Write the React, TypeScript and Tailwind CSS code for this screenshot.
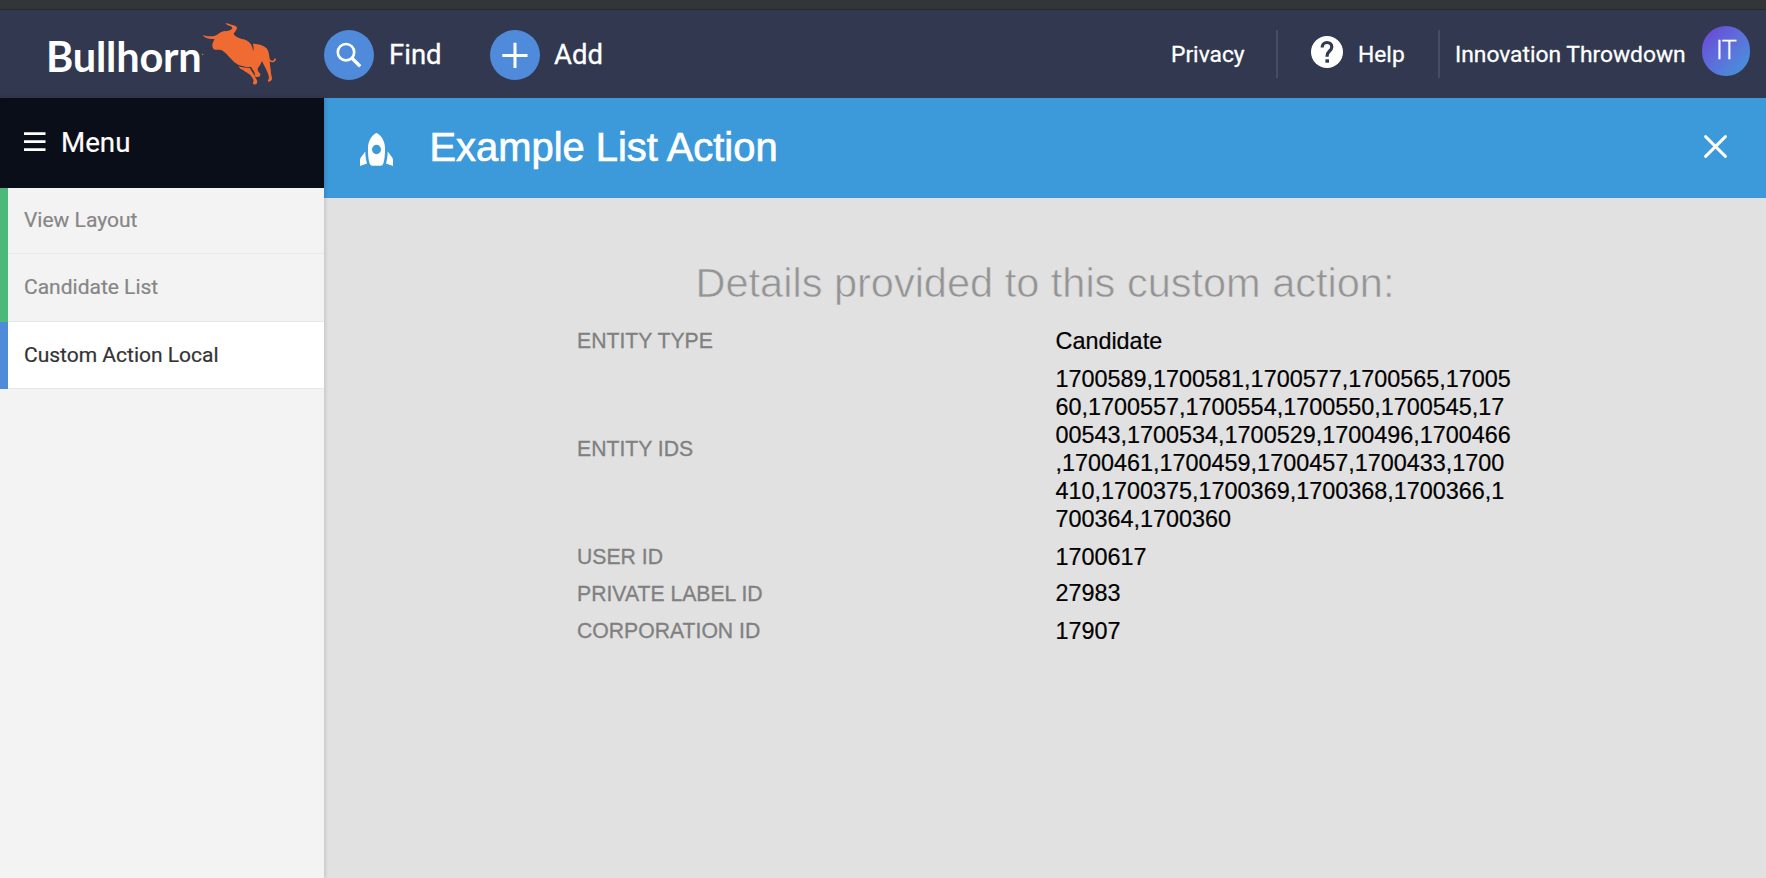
import React from "react";

const entityIds =
  "1700589,1700581,1700577,1700565,1700560,1700557,1700554,1700550,1700545,1700543,1700534,1700529,1700496,1700466,1700461,1700459,1700457,1700433,1700410,1700375,1700369,1700368,1700366,1700364,1700360";

const details = [
  { label: "ENTITY TYPE", value: "Candidate", height: "h-[38px]" },
  { label: "ENTITY IDS", value: entityIds, height: "h-[178px]" },
  { label: "USER ID", value: "1700617", height: "h-[38px]" },
  { label: "PRIVATE LABEL ID", value: "27983", height: "h-[35px]" },
  { label: "CORPORATION ID", value: "17907", height: "h-[40px]" },
];

const tabs = [
  { label: "View Layout", style: "h-[66px] text-[#868686]", bar: "bg-[#4cb97a]" },
  { label: "Candidate List", style: "h-[68px] text-[#868686]", bar: "bg-[#4cb97a]" },
  { label: "Custom Action Local", style: "h-[67px] bg-white text-[#333333]", bar: "bg-[#4f8bda]" },
];

function BullIcon() {
  return (
    <svg className="mt-[11px] h-[65px] w-[75px] shrink-0" viewBox="36 30 225 195" fill="#ef6b31">
      <path d="M107 37 C113 36 118 39 124 41 C133 43 141 45 141 50 C140 58 135 63 131 67 L133 72 C138 78 145 80 153 83 C168 85 178 92 183 100 C187 107 188 114 190 120 C192 113 190 106 189 98 C204 98 221 103 230 112 C237 121 237 133 239 143 C243 150 248 151 252 147 C251 143 254 141 258 143 C258 147 255 151 251 153 C246 155 242 153 239 150 C240 163 242 175 243 185 C243 192 247 199 246 204 C244 210 239 213 234 212 C233 208 236 204 237 200 C236 189 230 178 226 170 C222 163 219 157 216 150 C213 159 208 166 204 171 C201 178 206 184 210 187 C213 194 209 198 202 198 C196 199 193 194 195 190 C194 183 188 176 183 168 C173 169 157 166 146 162 C136 157 125 146 117 137 C108 127 99 117 90 116 C82 116 74 118 70 113 C66 106 66 101 69 94 C71 90 73 87 73 84 C63 84 45 84 38 72 C49 76 63 77 75 74 C80 73 83 70 87 67 C94 63 103 58 109 61 C115 58 122 59 126 53 C129 47 120 45 114 43 C110 41 107 40 107 37 Z" />
      <path d="M145 166 C155 170 169 171 180 171 C183 179 189 186 193 193 C195 200 200 205 202 211 C200 216 202 220 196 220 C192 222 188 219 189 215 C192 210 190 204 187 200 C181 192 175 187 169 184 C163 180 158 175 151 173 Z" />
      <circle cx="38" cy="130" r="2" fill="#a9adb9" />
    </svg>
  );
}

function RocketIcon() {
  return (
    <svg className="mt-[2px] h-[33px] w-[33px] shrink-0" viewBox="0 0 33 33" fill="white">
      <path fillRule="evenodd" d="M16.5 0 C12.3 1.6 8 7.5 8 15 C7.900 22 8.500 28 10 31.300 Q10.600 32.700 12.200 32.700 H20.800 Q22.400 32.700 23 31.300 C24.500 28 25.100 22 25 15 C25 7.500 20.700 1.600 16.500 0 Z M16.500 11.800 A4.500 4.700 0 1 1 16.500 21.200 A4.500 4.700 0 1 1 16.500 11.800 Z" />
      <path d="M5.300 18.600 C5.300 23 6 27 7 30.500 L0 33 V27 Q0 25.500 0.800 24.500 Z M27.700 18.600 C27.700 23 27 27 26 30.500 L33 33 V27 Q33 25.500 32.200 24.500 Z" />
    </svg>
  );
}

function Header() {
  return (
    <header className="flex h-[88px] shrink-0 items-start bg-[#31384f] text-white">
      <div className="flex w-[324px] items-start">
        <span className="ml-[46px] mt-[21px] w-[156px] whitespace-nowrap font-['Lato',sans-serif] text-[41.500px] font-bold leading-[50px] tracking-[-0.2px]">
          Bullhorn
        </span>
        <BullIcon />
      </div>
      <div className="mt-5 flex w-[166px] items-center gap-[15px]">
        <span className="flex size-[50px] items-center justify-center rounded-full bg-[#4f8bda]">
          <svg className="size-[50px]" viewBox="0 0 50 50" fill="none" stroke="white">
            <circle cx="22" cy="22.2" r="8.200" strokeWidth="2.600" />
            <path d="M27.800 28 L36.200 36.400" strokeWidth="3.400" />
          </svg>
        </span>
        <span className="text-[27.500px] leading-[50px] [-webkit-text-stroke:0.3px_white]">Find</span>
      </div>
      <div className="mt-5 flex items-center gap-[14px]">
        <span className="flex size-[50px] items-center justify-center rounded-full bg-[#4f8bda]">
          <svg className="size-[50px]" viewBox="0 0 50 50" fill="none" stroke="white" strokeWidth="3">
            <path d="M25 12.700 V38 M12.300 25.500 H37.500" />
          </svg>
        </span>
        <span className="text-[27.500px] leading-[50px] [-webkit-text-stroke:0.3px_white]">Add</span>
      </div>
      <div className="ml-auto mt-5 flex h-12 text-[22.800px] leading-[50px] [-webkit-text-stroke:0.3px_white]">
        <span className="w-[105px]">Privacy</span>
        <div className="flex w-[162px] border-l-2 border-[#474e62]">
          <svg className="ml-[33px] mt-[6px] size-8" viewBox="0 0 32 32">
            <circle cx="16" cy="16" r="16" fill="white" />
            <path d="M11.200 11.500 C11.200 8.500 13.300 6.500 16 6.500 C18.800 6.500 20.800 8.400 20.800 11 C20.800 13 19.700 14 18.300 15.300 C16.700 16.700 16 17.700 16 20.700" fill="none" stroke="#31384f" strokeWidth="3.200" />
            <path d="M14.400 23.300 h3.600 v3.400 h-3.600 Z" fill="#31384f" />
          </svg>
          <span className="ml-[15px]">Help</span>
        </div>
        <div className="flex border-l-2 border-[#474e62] pl-[15px] pr-4">
          <span className="w-[247px] whitespace-nowrap">Innovation Throwdown</span>
          <span className="-mt-1 flex h-[50px] w-12 items-center justify-center rounded-full bg-linear-to-br from-[#6a3fd6] to-[#3a98dc] text-[25px] font-light tracking-[-0.5px]">
            IT
          </span>
        </div>
      </div>
    </header>
  );
}

function Sidebar() {
  return (
    <aside className="z-10 w-[324px] shrink-0 bg-[#f3f3f3] text-[21px] shadow-[1px_0_4px_rgba(0,0,0,0.15)] [-webkit-text-stroke:0.2px_currentColor]">
      <div className="flex h-[90px] items-center bg-[#0a0e18] pl-6 text-white">
        <svg className="-mt-0.5 h-5 w-[22px]" viewBox="0 0 22 20" stroke="white" strokeWidth="2.700">
          <path d="M0 1.600 H21.500 M0 9.600 H21.500 M0 17.600 H21.500" />
        </svg>
        <span className="ml-[15px] text-[27.700px]">Menu</span>
      </div>
      {tabs.map((t) => (
        <div key={t.label} className={`flex items-center ${t.style}`}>
          <span className={`h-full w-2 ${t.bar}`} />
          <span className="flex h-full flex-1 items-center border-b border-[#e8e8e8] pl-4 pt-px">{t.label}</span>
        </div>
      ))}
    </aside>
  );
}

export default function App() {
  return (
    <div className="flex h-[878px] w-[1766px] flex-col overflow-hidden font-['Roboto',sans-serif]">
      <div className="h-[10px] shrink-0 border-b border-[#2a2b2c] bg-[#323638]" />
      <Header />
      <div className="flex min-h-0 flex-1">
        <Sidebar />
        <main className="flex flex-1 flex-col bg-[#e1e1e1] font-['Liberation_Sans',Arial,sans-serif]">
          <div className="flex h-[100px] items-center bg-[#3c99da] pl-9 pr-[39px] text-white">
            <RocketIcon />
            <h1 className="-mt-0.5 ml-[36.500px] text-[39.9px] leading-[50px] [-webkit-text-stroke:0.7px_white]">
              Example List Action
            </h1>
            <svg className="-mt-1 ml-auto size-[23px]" viewBox="0 0 23 23" stroke="white" strokeWidth="2.900" strokeLinecap="round">
              <path d="M1.600 1.600 L21.400 21.400 M21.400 1.600 L1.600 21.400" />
            </svg>
          </div>
          <h2 className="mt-[60px] text-center text-[41.500px] leading-[50px] text-[#949494] [-webkit-text-stroke:0.6px_#e1e1e1]">
            Details provided to this custom action:
          </h2>
          <div className="ml-[253px] mt-[14px] flex flex-col">
            {details.map((d) => (
              <div key={d.label} className={`flex items-center ${d.height}`}>
                <span className="w-[478.500px] text-[21.2px] leading-[28px] text-[#808080] [-webkit-text-stroke:0.3px_#808080]">{d.label}</span>
                <span className="w-[458px] text-[23.4px] leading-[28.070px] text-black [-webkit-text-stroke:0.2px_black] [font-kerning:none] [overflow-wrap:anywhere]">{d.value}</span>
              </div>
            ))}
          </div>
        </main>
      </div>
    </div>
  );
}
